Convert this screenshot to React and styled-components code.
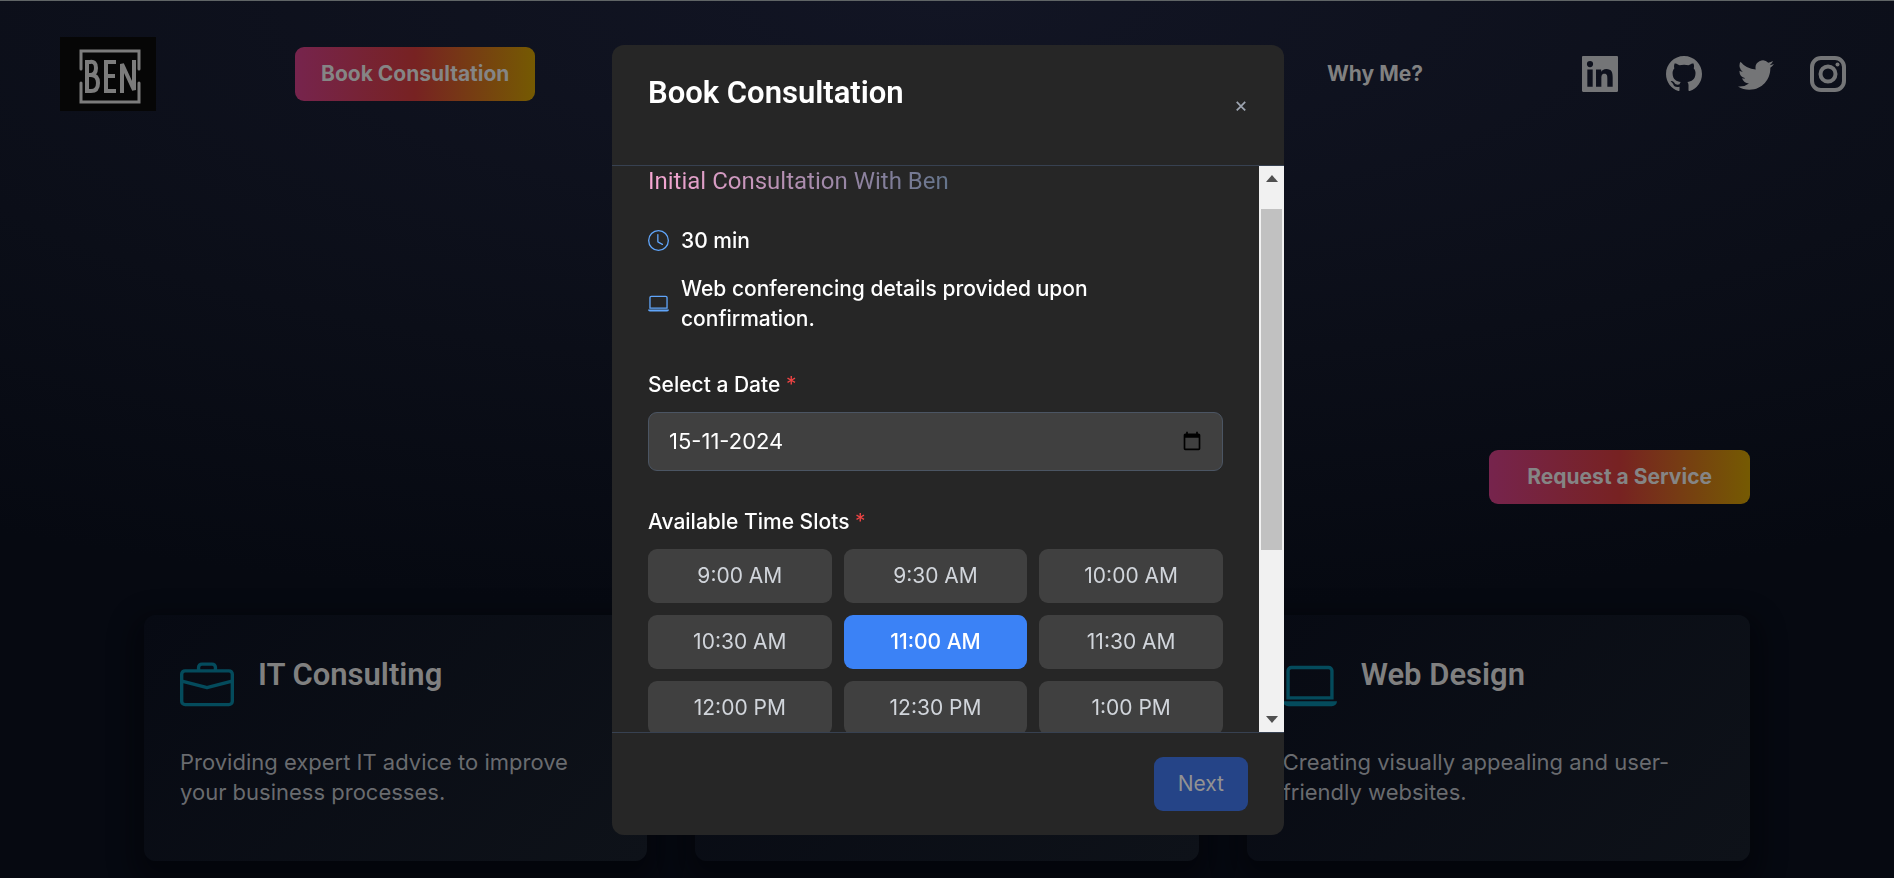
import React, { useEffect, useRef, useState } from "react";
import styled, { createGlobalStyle } from "styled-components";
import { BsGithub, BsTwitter, BsBriefcase, BsLaptop, BsClock } from "react-icons/bs";

const GlobalStyle = createGlobalStyle`
  *, *::before, *::after { box-sizing: border-box; }
  body {
    margin: 0;
    background: #060911;
    color: #fff;
    font: 400 21px/30px Inter, "Liberation Sans", sans-serif;
    overflow: hidden;
  }
  h1, h2, h3, p, ul { margin: 0; padding: 0; }
  button, input { font: inherit; }
  button { border: 0; cursor: pointer; }
`;

const Page = styled.div`
  min-height: 100vh;
  border-top: 1px solid #606566;
  background: radial-gradient(ellipse 100% 70% at 50% 0, #121524 0%, #0b0e18 60%, #060911 100%);
`;

const Header = styled.header`
  display: grid;
  grid-template-columns: 1fr auto;
  align-items: center;
  padding: 36px 48px 0 60px;
`;

const NavLeft = styled.nav`
  display: flex;
  align-items: center;
  justify-content: space-between;
  max-width: 1363px;
`;

const NavGroup = styled.div`
  display: flex;
  align-items: center;
  gap: 139px;
`;

const Logo = styled.a`
  display: flex;
  width: 96px;
  height: 74px;
  background: #060606;
`;

const NavLink = styled.a`
  color: #818181;
  font-weight: 700;
  text-decoration: none;
`;

const GradientButton = styled.button`
  height: 54px;
  padding: 0 ${(p) => (p.$wide ? 38 : 26)}px;
  border-radius: 9px;
  color: #858585;
  font-weight: 700;
  background: linear-gradient(90deg, #76244d, #772222 50%, #755a02);
`;

const Social = styled.div`
  display: flex;
  gap: 36px;
`;

const SocialLink = styled.a`
  display: flex;
  color: #747577;
  font-size: 36px;
  &:first-child { margin-right: 12px; }
`;

const Hero = styled.section`
  display: flex;
  justify-content: flex-end;
  padding: 339px 144px 0;
`;

const Services = styled.section`
  display: grid;
  grid-template-columns: repeat(3, 1fr);
  gap: 48px;
  padding: 111px 144px 17px;
`;

const Card = styled.article`
  height: 246px;
  padding: 36px;
  border-radius: 12px;
  background: linear-gradient(135deg, #070a13, #0e1219);
  box-shadow: 0 12px 24px 12px rgba(2, 3, 6, 0.4);
`;

const CardHead = styled.div`
  display: flex;
  align-items: center;
  gap: 24px;
  height: 70px;
  color: #044b5c;
  font-size: 54px;
`;

const CardTitle = styled.h3`
  color: #808080;
  font: 600 31px/42px Roboto, sans-serif;
  padding-bottom: 22px;
`;

const CardText = styled.p`
  margin-top: 26px;
  font-size: 22px;
  color: #696b6f;
`;

const Overlay = styled.div`
  position: fixed;
  inset: 0;
  display: flex;
  align-items: center;
  justify-content: center;
  padding: 2px 0 0 2px;
`;

const Modal = styled.section`
  display: flex;
  flex-direction: column;
  width: 672px;
  height: 90vh;
  border-radius: 12px;
  overflow: hidden;
  background: #262626;
`;

const ModalHead = styled.header`
  display: flex;
  justify-content: space-between;
  align-items: center;
  height: 121px;
  padding: 0 36px;
  border-bottom: 1px solid #374151;
`;

const ModalTitle = styled.h2`
  font: 600 31px/42px Roboto, sans-serif;
  padding-bottom: 24px;
`;

const Close = styled.button`
  padding: 0;
  background: none;
  color: #9ca3af;
`;

const ModalBody = styled.div`
  display: flex;
  flex: 1;
  min-height: 0;
`;

const Scroller = styled.div`
  flex: 1;
  padding: 24px 36px 60px;
  overflow-y: scroll;
  scrollbar-width: none;
`;

const BarTrack = styled.div`
  display: flex;
  flex-direction: column;
  width: 25px;
  background: #f1f1f1;
`;

const BarArrow = styled.button`
  display: flex;
  align-items: center;
  justify-content: center;
  height: 25px;
  padding: 0;
  background: none;
`;

const BarLane = styled.div`
  flex: 1;
  padding: 0 2px;
`;

const BarThumb = styled.div`
  background: #c1c1c1;
`;

const EventName = styled.h3`
  width: fit-content;
  font: 400 24px/42px Roboto, sans-serif;
  color: transparent;
  background: linear-gradient(90deg, #f9a8d4, #64748b);
  background-clip: text;
`;

const Details = styled.ul`
  display: grid;
  gap: 18px;
  margin-top: 24px;
  list-style: none;
`;

const Detail = styled.li`
  display: flex;
  align-items: center;
  gap: 12px;
  font-weight: 500;
  svg { flex: none; color: #60a5fa; }
`;

const Label = styled.label`
  display: block;
  margin: 36px 0 12px;
  font-weight: 500;
`;

const Required = styled.span`
  color: #ef4444;
  font-weight: 400;
`;

const DateField = styled.div`
  display: flex;
  align-items: center;
  height: 59px;
  padding: 0 20px;
  border: 1px solid #4b5563;
  border-radius: 9px;
  background: #404040;
`;

const DateInput = styled.input`
  flex: 1;
  min-width: 0;
  padding: 0;
  border: 0;
  outline: 0;
  background: none;
  color: #fff;
  font-size: 22px;
`;

const IconButton = styled.button`
  display: flex;
  padding: 0;
  background: none;
`;

const Slots = styled.div`
  display: grid;
  grid-template-columns: repeat(3, 1fr);
  gap: 12px;
`;

const Slot = styled.button`
  height: 54px;
  padding: 0;
  border-radius: 9px;
  background: ${(p) => (p.$selected ? "#3b82f6" : "#404040")};
  color: ${(p) => (p.$selected ? "#fff" : "#d1d5db")};
  font-weight: ${(p) => (p.$selected ? 500 : 400)};
`;

const ModalFoot = styled.footer`
  display: flex;
  justify-content: flex-end;
  padding: 24px 36px;
  border-top: 1px solid #374151;
`;

const Next = styled.button`
  height: 54px;
  padding: 0 24px;
  border-radius: 9px;
  background: #254487;
  color: #929292;
`;

const services = [
  { icon: BsBriefcase, title: "IT Consulting", text: "Providing expert IT advice to improve your business processes." },
  { icon: null, title: "", text: "" },
  { icon: BsLaptop, title: "Web Design", text: "Creating visually appealing and user-friendly websites." },
];

const times = [
  "9:00 AM", "9:30 AM", "10:00 AM", "10:30 AM", "11:00 AM", "11:30 AM",
  "12:00 PM", "12:30 PM", "1:00 PM", "1:30 PM", "2:00 PM", "2:30 PM",
  "3:00 PM", "3:30 PM", "4:00 PM", "4:30 PM", "5:00 PM", "5:30 PM",
];

function BenLogo() {
  return (
    <svg width="96" height="74" viewBox="0 0 96 74" fill="none" stroke="#7c7c7c" strokeWidth="3">
      <path d="M21 32V14h58v18M21 46v19h58V46" strokeLinecap="round" />
      <g strokeWidth="4">
        <path d="M27 25v29h4q7 0 7-8t-7-8h-3 2q6 0 6-7t-6-6z" />
        <path d="M56 25H46v29h10M46 39h9" />
        <path d="M62 56V27l12 26V23" />
      </g>
    </svg>
  );
}

function LinkedInIcon() {
  return (
    <svg width="36" height="36" viewBox="0 0 24 24" fill="currentColor">
      <path d="M20.447 20.452h-3.554v-5.569c0-1.328-.027-3.037-1.852-3.037-1.853 0-2.136 1.445-2.136 2.939v5.667H9.351V9h3.414v1.561h.046c.477-.9 1.637-1.850 3.370-1.850 3.601 0 4.267 2.370 4.267 5.455v6.286zM5.337 7.433a2.062 2.062 0 0 1-2.063-2.065 2.064 2.064 0 1 1 2.063 2.065zm1.782 13.019H3.555V9h3.564v11.452zM23.200 0H.8C.3 0 0 .3 0 .8v22.400c0 .5.3.8.8.8h22.400c.5 0 .8-.3.8-.8V.8c0-.5-.3-.8-.8-.8z" />
    </svg>
  );
}

function InstagramIcon() {
  return (
    <svg width="36" height="36" viewBox="0 0 36 36" fill="none" stroke="currentColor">
      <rect x="2" y="2" width="32" height="32" rx="9" strokeWidth="4" />
      <circle cx="18" cy="18" r="7.500" strokeWidth="4" />
      <circle cx="27.500" cy="8.500" r="2" fill="currentColor" stroke="none" />
    </svg>
  );
}

export default function App() {
  const ref = useRef(null);
  const [time, setTime] = useState("11:00 AM");
  const [date, setDate] = useState("15-11-2024");
  const [bar, setBar] = useState({ size: 66, top: 3 });
  const sync = () => {
    const el = ref.current;
    setBar({ size: (el.clientHeight / el.scrollHeight) * 100, top: (el.scrollTop / el.scrollHeight) * 100 });
  };
  useEffect(() => {
    ref.current.scrollTop = 30;
    sync();
  }, []);
  const scrollBy = (n) => ref.current.scrollBy(0, n);

  return (
    <>
      <GlobalStyle />
      <Page>
        <Header>
          <NavLeft>
            <NavGroup>
              <Logo href="#" aria-label="Ben"><BenLogo /></Logo>
              <GradientButton>Book Consultation</GradientButton>
            </NavGroup>
            <NavLink href="#why">Why Me?</NavLink>
          </NavLeft>
          <Social>
            <SocialLink href="#linkedin" aria-label="LinkedIn"><LinkedInIcon /></SocialLink>
            <SocialLink href="#github" aria-label="GitHub"><BsGithub /></SocialLink>
            <SocialLink href="#twitter" aria-label="Twitter"><BsTwitter /></SocialLink>
            <SocialLink href="#instagram" aria-label="Instagram"><InstagramIcon /></SocialLink>
          </Social>
        </Header>
        <Hero>
          <GradientButton $wide>Request a Service</GradientButton>
        </Hero>
        <Services>
          {services.map(({ icon: Icon, title, text }, i) => (
            <Card key={i}>
              {Icon && (
                <>
                  <CardHead><Icon /><CardTitle>{title}</CardTitle></CardHead>
                  <CardText>{text}</CardText>
                </>
              )}
            </Card>
          ))}
        </Services>
      </Page>
      <Overlay>
        <Modal role="dialog" aria-labelledby="modal-title">
          <ModalHead>
            <ModalTitle id="modal-title">Book Consultation</ModalTitle>
            <Close aria-label="Close">×</Close>
          </ModalHead>
          <ModalBody>
            <Scroller ref={ref} onScroll={sync}>
              <EventName>Initial Consultation With Ben</EventName>
              <Details>
                <Detail><BsClock />30 min</Detail>
                <Detail><BsLaptop />Web conferencing details provided upon confirmation.</Detail>
              </Details>
              <Label htmlFor="date">Select a Date <Required>*</Required></Label>
              <DateField>
                <DateInput id="date" value={date} onChange={(e) => setDate(e.target.value)} />
                <IconButton aria-label="Open calendar">
                  <svg width="20" height="20" viewBox="0 0 24 24"><path d="M20 3h-1V1h-2v2H7V1H5v2H4c-1.100 0-2 .9-2 2v16c0 1.100.9 2 2 2h16c1.100 0 2-.9 2-2V5c0-1.100-.9-2-2-2zm0 18H4V8h16v13z" /></svg>
                </IconButton>
              </DateField>
              <Label as="p" id="slots">Available Time Slots <Required>*</Required></Label>
              <Slots role="group" aria-labelledby="slots">
                {times.map((t) => (
                  <Slot key={t} $selected={t === time} onClick={() => setTime(t)}>{t}</Slot>
                ))}
              </Slots>
            </Scroller>
            <BarTrack>
              <BarArrow aria-label="Scroll up" onClick={() => scrollBy(-60)}>
                <svg width="12" height="7" viewBox="0 0 12 7"><path d="M0 7l6-7 6 7z" fill="#505050" /></svg>
              </BarArrow>
              <BarLane>
                <div style={{ height: `${bar.top}%` }} />
                <BarThumb style={{ height: `${bar.size}%` }} />
              </BarLane>
              <BarArrow aria-label="Scroll down" onClick={() => scrollBy(60)}>
                <svg width="12" height="7" viewBox="0 0 12 7"><path d="M0 0l6 7 6-7z" fill="#505050" /></svg>
              </BarArrow>
            </BarTrack>
          </ModalBody>
          <ModalFoot><Next>Next</Next></ModalFoot>
        </Modal>
      </Overlay>
    </>
  );
}
